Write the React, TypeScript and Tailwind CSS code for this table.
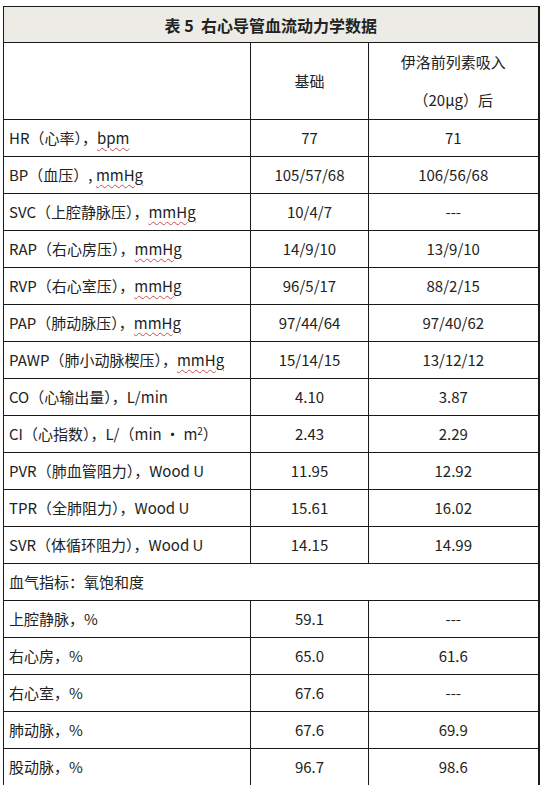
const rows: { label: React.ReactNode; a: string; b: string }[] = [];

function Squiggle({ children }: { children: React.ReactNode }) {
  return (
    <span className="underline decoration-wavy decoration-[#c85050] decoration-1 underline-offset-[3px]">
      {children}
    </span>
  );
}

const hemo = [
  { label: <>HR（心率），<Squiggle>bpm</Squiggle></>, a: "77", b: "71" },
  { label: <>BP（血压）, <Squiggle>mmHg</Squiggle></>, a: "105/57/68", b: "106/56/68" },
  { label: <>SVC（上腔静脉压），<Squiggle>mmHg</Squiggle></>, a: "10/4/7", b: "---" },
  { label: <>RAP（右心房压），<Squiggle>mmHg</Squiggle></>, a: "14/9/10", b: "13/9/10" },
  { label: <>RVP（右心室压），<Squiggle>mmHg</Squiggle></>, a: "96/5/17", b: "88/2/15" },
  { label: <>PAP（肺动脉压），<Squiggle>mmHg</Squiggle></>, a: "97/44/64", b: "97/40/62" },
  { label: <>PAWP（肺小动脉楔压），<Squiggle>mmHg</Squiggle></>, a: "15/14/15", b: "13/12/12" },
  { label: <>CO（心输出量），L/min</>, a: "4.10", b: "3.87" },
  {
    label: (
      <>
        CI（心指数），L/（min · m<sup className="text-[10px]">2</sup>）
      </>
    ),
    a: "2.43",
    b: "2.29",
  },
  { label: <>PVR（肺血管阻力），Wood U</>, a: "11.95", b: "12.92" },
  { label: <>TPR（全肺阻力），Wood U</>, a: "15.61", b: "16.02" },
  { label: <>SVR（体循环阻力），Wood U</>, a: "14.15", b: "14.99" },
];

const gas = [
  { label: "上腔静脉，%", a: "59.1", b: "---" },
  { label: "右心房，%", a: "65.0", b: "61.6" },
  { label: "右心室，%", a: "67.6", b: "---" },
  { label: "肺动脉，%", a: "67.6", b: "69.9" },
  { label: "股动脉，%", a: "96.7", b: "98.6" },
];

export default function App() {
  const cell = "border border-[#1a1a1a]";
  return (
    <div
      className="min-h-[785px] w-[540px] bg-white pl-[3px] pt-[6px] text-[15px] text-[#222]"
      style={{ fontFamily: '"Noto Sans CJK SC", "Noto Sans", sans-serif' }}
    >
      <table className="w-[535px] table-fixed border-collapse border-r-2 border-[#1a1a1a]">
        <colgroup>
          <col className="w-[247px]" />
          <col className="w-[118px]" />
          <col className="w-[170px]" />
        </colgroup>
        <tbody>
          <tr className="h-[36px] bg-[#ecebe5]">
            <td colSpan={3} className={`${cell} text-center text-[16px] font-bold`}>
              表 5&nbsp;&nbsp;右心导管血流动力学数据
            </td>
          </tr>
          <tr className="h-[75px]">
            <td className={cell}></td>
            <td className={`${cell} text-center`}>基础</td>
            <td className={`${cell} text-center leading-[38px]`}>
              <div>伊洛前列素吸入</div>
              <div>（20μg）后</div>
            </td>
          </tr>
          {hemo.map((r, i) => (
            <tr key={i} className="h-[37px]">
              <td className={`${cell} whitespace-nowrap pl-[5px]`}>{r.label}</td>
              <td className={`${cell} text-center`}>{r.a}</td>
              <td className={`${cell} text-center`}>{r.b}</td>
            </tr>
          ))}
          <tr className="h-[37px]">
            <td colSpan={3} className={`${cell} pl-[5px]`}>
              血气指标：氧饱和度
            </td>
          </tr>
          {gas.map((r, i) => (
            <tr key={i} className="h-[37px]">
              <td className={`${cell} pl-[5px]`}>{r.label}</td>
              <td className={`${cell} text-center`}>{r.a}</td>
              <td className={`${cell} text-center`}>{r.b}</td>
            </tr>
          ))}
        </tbody>
      </table>
    </div>
  );
}
